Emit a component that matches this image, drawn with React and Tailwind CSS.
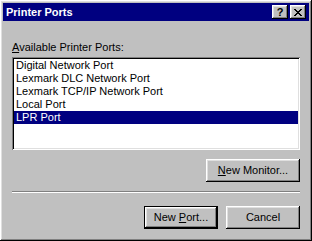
const ports = [
  "Digital Network Port",
  "Lexmark DLC Network Port",
  "Lexmark TCP/IP Network Port",
  "Local Port",
  "LPR Port",
];

const raised =
  "shadow-[inset_-1px_-1px_#000,inset_1px_1px_#fff,inset_-2px_-2px_#808080,inset_2px_2px_#dfdfdf]";

function TitleButton({ children }) {
  return (
    <div className={`w-[16px] h-[14px] bg-[#c0c0c0] flex items-center justify-center ${raised}`}>
      {children}
    </div>
  );
}

function Button({ children, isDefault }) {
  if (isDefault) {
    return (
      <div className="w-[74px] h-[23px] border border-black">
        <div className={`w-full h-full bg-[#c0c0c0] flex items-center justify-center ${raised}`}>
          {children}
        </div>
      </div>
    );
  }
  return (
    <div className={`w-[74px] h-[23px] bg-[#c0c0c0] flex items-center justify-center ${raised}`}>
      {children}
    </div>
  );
}

export default function App() {
  return (
    <div
      className={`w-[312px] h-[241px] bg-[#c0c0c0] p-[3px] flex flex-col text-[11px] leading-[13px] text-black ${raised}`}
      style={{ fontFamily: '"Liberation Sans", Arial, sans-serif' }}
    >
      {/* title bar */}
      <div className="h-[18px] bg-[#000080] flex items-center pl-[3px] pr-[3px]">
        <span className="text-white font-bold text-[11px] flex-1">Printer Ports</span>
        <div className="flex gap-[2px]">
          <TitleButton>
            <span className="font-bold text-[11px] leading-none mt-[1px]">?</span>
          </TitleButton>
          <TitleButton>
            <svg width="8" height="7" viewBox="0 0 8 7" shapeRendering="crispEdges">
              <path
                d="M0 0h2v1h-2zM6 0h2v1h-2zM1 1h2v1h-2zM5 1h2v1h-2zM2 2h4v1h-4zM3 3h2v1h-2zM2 4h4v1h-4zM1 5h2v1h-2zM5 5h2v1h-2zM0 6h2v1h-2zM6 6h2v1h-2z"
                fill="#000"
              />
            </svg>
          </TitleButton>
        </div>
      </div>

      <div className="px-[9px] flex flex-col">
        <div className="mt-[20px]">
          <span className="underline">A</span>vailable Printer Ports:
        </div>

        {/* list box */}
        <div className="mt-[3px] h-[93px] bg-white shadow-[inset_1px_1px_#808080,inset_-1px_-1px_#fff,inset_2px_2px_#000,inset_-2px_-2px_#dfdfdf] p-[2px]">
          {ports.map((p, i) => (
            <div
              key={p}
              className={`h-[13px] pl-[2px] whitespace-nowrap ${
                i === ports.length - 1 ? "bg-[#000080] text-white" : ""
              }`}
            >
              {p}
            </div>
          ))}
        </div>

        <div className="mt-[9px] flex justify-end">
          <div className={`w-[94px] h-[23px] bg-[#c0c0c0] flex items-center justify-center ${raised}`}>
            <span>
              <span className="underline">N</span>ew Monitor...
            </span>
          </div>
        </div>

        {/* etched separator */}
        <div className="mt-[9px] border-t border-[#808080] border-b border-b-white" />

        <div className="mt-[13px] flex justify-end gap-[8px]">
          <Button isDefault>
            <span>
              New <span className="underline">P</span>ort...
            </span>
          </Button>
          <Button>Cancel</Button>
        </div>
      </div>
    </div>
  );
}
